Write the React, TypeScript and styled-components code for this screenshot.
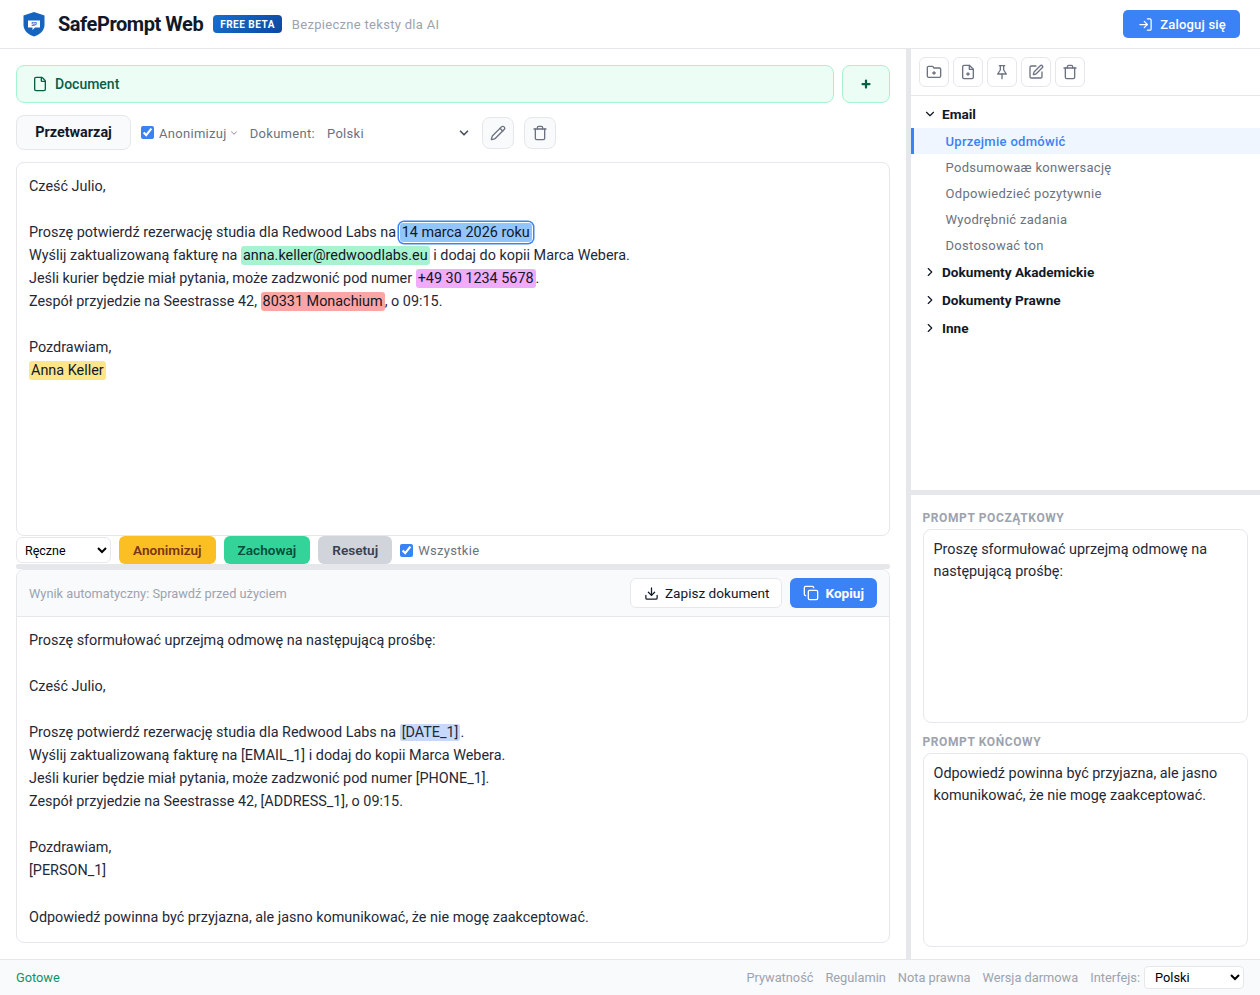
import React from "react";
import styled, { createGlobalStyle } from "styled-components";
import {
  ChevronDown,
  ChevronRight,
  Copy,
  Download,
  File,
  LogIn,
  Pencil,
  Plus,
  SquarePen,
  Trash,
} from "lucide-react";

const GlobalStyle = createGlobalStyle`
  html, body {
    margin: 0;
    padding: 0;
    background: #ffffff;
  }
  body {
    font-family: Roboto, "Liberation Sans", sans-serif;
    color: #1f2937;
  }
  * {
    box-sizing: border-box;
  }
`;

const Page = styled.div`
  display: flex;
  flex-direction: column;
  width: 1260px;
  height: 995px;
  overflow: hidden;
`;

const Header = styled.header`
  display: flex;
  align-items: center;
  flex: 0 0 49px;
  padding: 0 20px 0 22px;
  border-bottom: 1px solid #e5e7eb;
`;

const LogoMark = styled.svg`
  width: 24px;
  height: 26px;
  margin-right: 12px;
`;

const Brand = styled.div`
  margin-right: 10px;
  color: #111827;
  font-size: 20px;
  font-weight: 700;
  letter-spacing: -0.45px;
`;

const BetaBadge = styled.span`
  display: flex;
  align-items: center;
  height: 18px;
  margin-right: 10px;
  padding: 0 7px;
  background: linear-gradient(135deg, #1670cf, #0d47a1);
  border-radius: 4px;
  color: #ffffff;
  font-size: 10px;
  font-weight: 700;
  letter-spacing: 0.5px;
`;

const Tagline = styled.span`
  color: #9ca3af;
  font-size: 13px;
  letter-spacing: 0.3px;
`;

const LoginButton = styled.button`
  display: flex;
  align-items: center;
  gap: 7px;
  height: 28px;
  margin-left: auto;
  padding: 0 14px 0 15px;
  background: #3b82f6;
  border: none;
  border-radius: 5px;
  color: #ffffff;
  font: 500 13px Roboto, sans-serif;
  letter-spacing: 0.2px;
`;

const Main = styled.main`
  display: flex;
  flex: 1;
  min-height: 0;
`;

const LeftPane = styled.section`
  display: flex;
  flex-direction: column;
  width: 906px;
  padding: 16px;
`;

const Divider = styled.div`
  flex: 0 0 5px;
  background: #e5e7eb;
`;

const RightPane = styled.aside`
  display: flex;
  flex-direction: column;
  flex: 1;
  min-width: 0;
`;

const DocRow = styled.div`
  display: flex;
  gap: 8px;
  height: 38px;
`;

const DocTab = styled.div`
  display: flex;
  align-items: center;
  flex: 1;
  gap: 7px;
  padding: 0 15px;
  background: #ecfdf5;
  border: 1px solid #a7f3d0;
  border-radius: 8px;
  color: #065f46;
  font-size: 14px;
  font-weight: 500;
`;

const AddTab = styled.button`
  display: flex;
  align-items: center;
  justify-content: center;
  width: 48px;
  padding: 0;
  background: #ecfdf5;
  border: 1px solid #a7f3d0;
  border-radius: 8px;
  color: #065f46;
`;

const Toolbar = styled.div`
  display: flex;
  align-items: center;
  height: 35px;
  margin: 12px 0;
`;

const ProcessButton = styled.button`
  width: 115px;
  height: 35px;
  margin-right: 10px;
  background: #f9fafb;
  border: 1px solid #e5e7eb;
  border-radius: 8px;
  color: #111827;
  font: 700 14.4px Roboto, sans-serif;
`;

const Check = styled.input.attrs({ type: "checkbox", defaultChecked: true })`
  width: 13px;
  height: 13px;
  margin: 0 5px 0 0;
  accent-color: #3b82f6;
`;

const MutedLabel = styled.span`
  padding-top: 1px;
  color: #6b7280;
  font-size: 13px;
  letter-spacing: 0.3px;
`;

const AnonChevron = styled(ChevronDown)`
  margin: 1px 11px 0 2px;
  color: #9ca3af;
`;

const LangValue = styled(MutedLabel)`
  width: 130px;
  margin-left: 12px;
`;

const LangChevron = styled(ChevronDown)`
  margin-right: 11px;
  color: #4b5563;
`;

const SquareButton = styled.button`
  display: flex;
  align-items: center;
  justify-content: center;
  width: 32px;
  height: 32px;
  margin-right: 10px;
  padding: 0;
  background: #f9fafb;
  border: 1px solid #e5e7eb;
  border-radius: 8px;
  color: #6b7280;
`;

const Editor = styled.div`
  flex: 0 0 374px;
  padding: 12px;
  background: #ffffff;
  border: 1px solid #e5e7eb;
  border-radius: 8px;
  color: #1f2937;
  font-size: 14.4px;
  line-height: 1.6;
`;

const Line = styled.div`
  min-height: 23px;
  white-space: pre;
`;

const Mark = styled.span<{ $bg: string }>`
  padding: 1px 2px;
  background: ${({ $bg }) => $bg};
  border-radius: 3px;
  color: #111827;
`;

const ActiveMark = styled(Mark)`
  box-shadow: 0 0 0 1px #ffffff, 0 0 0 2.5px #3b82f6;
  border-radius: 4px;
`;

const TokenMark = styled.span`
  padding: 0 2px;
  background: #c7d9fb;
  border-radius: 2px;
`;

const ActionRow = styled.div`
  display: flex;
  align-items: center;
  flex: 0 0 28px;
  gap: 8px;
`;

const ModeSelect = styled.select`
  width: 95px;
  height: 26px;
  padding: 0 4px;
  background: #ffffff;
  border: 1px solid #e5e7eb;
  border-radius: 6px;
  color: #000000;
  font: 12.5px Roboto, sans-serif;
`;

const ActionButton = styled.button<{ $bg: string; $fg: string }>`
  height: 28px;
  padding: 0 14px;
  background: ${({ $bg }) => $bg};
  border: none;
  border-radius: 6px;
  color: ${({ $fg }) => $fg};
  font: 600 13.6px Roboto, sans-serif;
`;

const AllLabel = styled.label`
  display: flex;
  align-items: center;
`;

const HSplit = styled.div`
  flex: 0 0 5px;
  background: #e5e7eb;
  border-radius: 2px;
`;

const Result = styled.div`
  display: flex;
  flex-direction: column;
  flex: 1;
  min-height: 0;
  background: #ffffff;
  border: 1px solid #e5e7eb;
  border-radius: 8px;
  overflow: hidden;
`;

const ResultBar = styled.div`
  display: flex;
  align-items: center;
  flex: 0 0 47px;
  padding: 0 12px;
  background: #f9fafb;
  border-bottom: 1px solid #e5e7eb;
`;

const ResultNote = styled.span`
  margin-right: auto;
  color: #9ca3af;
  font-size: 12.8px;
`;

const SaveButton = styled.button`
  display: flex;
  align-items: center;
  gap: 6px;
  height: 30px;
  margin-right: 8px;
  padding: 0 12px 0 13px;
  background: #ffffff;
  border: 1px solid #e5e7eb;
  border-radius: 6px;
  color: #111827;
  font: 13.6px Roboto, sans-serif;
`;

const CopyButton = styled.button`
  display: flex;
  align-items: center;
  gap: 6px;
  height: 30px;
  padding: 0 13px;
  background: #3b82f6;
  border: none;
  border-radius: 6px;
  color: #ffffff;
  font: 700 13.6px Roboto, sans-serif;
`;

const ResultBody = styled.div`
  padding: 12px;
  color: #1f2937;
  font-size: 14.4px;
  line-height: 1.6;
`;

const IconBar = styled.div`
  display: flex;
  align-items: center;
  flex: 0 0 47px;
  gap: 4px;
  padding: 0 8px;
  border-bottom: 1px solid #e5e7eb;
`;

const IconButton = styled.button`
  display: flex;
  align-items: center;
  justify-content: center;
  width: 30px;
  height: 30px;
  padding: 0;
  background: #ffffff;
  border: 1px solid #e5e7eb;
  border-radius: 6px;
  color: #6b7280;
`;

const Tree = styled.nav`
  flex: 0 0 394px;
  padding-top: 4px;
`;

const Group = styled.div`
  display: flex;
  align-items: center;
  gap: 5px;
  height: 28px;
  padding-left: 12px;
  color: #111827;
  font-size: 13.6px;
  font-weight: 700;
`;

const Item = styled.div<{ $active?: boolean }>`
  display: flex;
  align-items: center;
  height: 26px;
  padding-left: 31.5px;
  background: ${({ $active }) => ($active ? "#eff6ff" : "transparent")};
  border-left: 3px solid ${({ $active }) => ($active ? "#3b82f6" : "transparent")};
  color: ${({ $active }) => ($active ? "#3b82f6" : "#6b7280")};
  font-size: 13px;
  font-weight: ${({ $active }) => ($active ? 500 : 400)};
  letter-spacing: 0.3px;
`;

const SideSplit = styled.div`
  flex: 0 0 5px;
  background: #e5e7eb;
`;

const Prompts = styled.div`
  display: flex;
  flex-direction: column;
  flex: 1;
  min-height: 0;
  padding: 16px 12px 12px 11.5px;
`;

const PromptLabel = styled.div`
  height: 14px;
  margin-bottom: 4px;
  color: #9ca3af;
  font-size: 12px;
  font-weight: 700;
  line-height: 14px;
  letter-spacing: 0.6px;
  text-transform: uppercase;
`;

const PromptBox = styled.div`
  flex: 0 0 194px;
  margin-bottom: 12px;
  padding: 9px 10px;
  background: #ffffff;
  border: 1px solid #e5e7eb;
  border-radius: 8px;
  color: #1f2937;
  font-size: 14.4px;
  line-height: 22px;

  &:last-child {
    margin-bottom: 0;
  }
`;

const Footer = styled.footer`
  display: flex;
  align-items: center;
  flex: 0 0 36px;
  padding: 0 16px;
  background: #f9fafb;
  border-top: 1px solid #e5e7eb;
  font-size: 12.8px;
`;

const Status = styled.span`
  margin-right: auto;
  color: #059669;
`;

const FooterLink = styled.a`
  margin-right: 12px;
  color: #9ca3af;
`;

const FooterLabel = styled.span`
  margin-right: 4px;
  color: #9ca3af;
`;

const LangSelect = styled.select`
  width: 100px;
  height: 23px;
  padding: 0 6px;
  background: #ffffff;
  border: 1px solid #e5e7eb;
  border-radius: 4px;
  color: #000000;
  font: 12.8px Roboto, sans-serif;
`;

const BadgeText = styled.text`
  fill: #1565c0;
  font-family: Roboto, sans-serif;
  font-size: 4.5px;
  font-weight: 700;
`;

const Logo = () => (
  <LogoMark viewBox="0 0 24 26">
    <path d="M12 1 L22.5 4.5 V14 C22.5 20 17 24 12 25.5 C7 24 1.5 20 1.5 14 V4.5 Z" fill="#1565c0" />
    <path d="M6 9.5 H18 V16.5 H13 L10.5 19 V16.5 H6 Z" fill="#ffffff" />
    <BadgeText x="12" y="14.7" textAnchor="middle">SP</BadgeText>
  </LogoMark>
);

const ToolIcon = styled.svg.attrs({
  viewBox: "0 0 24 24",
  fill: "none",
  stroke: "currentColor",
  strokeWidth: 2,
  strokeLinecap: "round",
  strokeLinejoin: "round",
})`
  width: 16px;
  height: 16px;
`;

const FolderAdd = () => (
  <ToolIcon>
    <path d="M4 20h16a2 2 0 0 0 2-2V8a2 2 0 0 0-2-2h-8L10 3.5H4a2 2 0 0 0-2 2V18a2 2 0 0 0 2 2Z" />
    <path d="M12 11.5v4M10 13.5h4" />
  </ToolIcon>
);

const FileAdd = () => (
  <ToolIcon>
    <path d="M14 2H6a2 2 0 0 0-2 2v16a2 2 0 0 0 2 2h12a2 2 0 0 0 2-2V8Z" />
    <path d="M14 2v6h6" />
    <path d="M12 13v4M10 15h4" />
  </ToolIcon>
);

const PushPin = () => (
  <ToolIcon>
    <path d="M8 2.5h8" />
    <path d="M9.5 2.5V9L5.5 15h13l-4-6V2.5" />
    <path d="M12 15v7" />
  </ToolIcon>
);

const App = () => {
  return (
    <Page>
      <GlobalStyle />
      <Header>
        <Logo />
        <Brand>SafePrompt Web</Brand>
        <BetaBadge>FREE BETA</BetaBadge>
        <Tagline>Bezpieczne teksty dla AI</Tagline>
        <LoginButton>
          <LogIn size={15} />
          Zaloguj się
        </LoginButton>
      </Header>
      <Main>
        <LeftPane>
          <DocRow>
            <DocTab>
              <File size={16} />
              Document
            </DocTab>
            <AddTab>
              <Plus size={12} strokeWidth={4.5} />
            </AddTab>
          </DocRow>
          <Toolbar>
            <ProcessButton>Przetwarzaj</ProcessButton>
            <Check />
            <MutedLabel>Anonimizuj</MutedLabel>
            <AnonChevron size={10} strokeWidth={2.5} />
            <MutedLabel>Dokument:</MutedLabel>
            <LangValue>Polski</LangValue>
            <LangChevron size={14} strokeWidth={3} />
            <SquareButton>
              <Pencil size={16} />
            </SquareButton>
            <SquareButton>
              <Trash size={16} />
            </SquareButton>
          </Toolbar>
          <Editor>
            <Line>Cześć Julio,</Line>
            <Line> </Line>
            <Line>
              Proszę potwierdź rezerwację studia dla Redwood Labs na <ActiveMark $bg="#93c5fd">14 marca 2026 roku</ActiveMark>
            </Line>
            <Line>
              Wyślij zaktualizowaną fakturę na <Mark $bg="#a7f3d0">anna.keller@redwoodlabs.eu</Mark> i dodaj do kopii Marca Webera.
            </Line>
            <Line>
              Jeśli kurier będzie miał pytania, może zadzwonić pod numer <Mark $bg="#f0abfc">+49 30 1234 5678</Mark>.
            </Line>
            <Line>
              Zespół przyjedzie na Seestrasse 42, <Mark $bg="#fca5a5">80331 Monachium</Mark>, o 09:15.
            </Line>
            <Line> </Line>
            <Line>Pozdrawiam,</Line>
            <Line>
              <Mark $bg="#fde68a">Anna Keller</Mark>
            </Line>
          </Editor>
          <ActionRow>
            <ModeSelect defaultValue="manual">
              <option value="manual">Ręczne</option>
            </ModeSelect>
            <ActionButton $bg="#fbbf24" $fg="#78350f">Anonimizuj</ActionButton>
            <ActionButton $bg="#34d399" $fg="#064e3b">Zachowaj</ActionButton>
            <ActionButton $bg="#d1d5db" $fg="#374151">Resetuj</ActionButton>
            <AllLabel>
              <Check />
              <MutedLabel>Wszystkie</MutedLabel>
            </AllLabel>
          </ActionRow>
          <HSplit />
          <Result>
            <ResultBar>
              <ResultNote>Wynik automatyczny: Sprawdź przed użyciem</ResultNote>
              <SaveButton>
                <Download size={15} />
                Zapisz dokument
              </SaveButton>
              <CopyButton>
                <Copy size={16} />
                Kopiuj
              </CopyButton>
            </ResultBar>
            <ResultBody>
              <Line>Proszę sformułować uprzejmą odmowę na następującą prośbę:</Line>
              <Line> </Line>
              <Line>Cześć Julio,</Line>
              <Line> </Line>
              <Line>
                Proszę potwierdź rezerwację studia dla Redwood Labs na <TokenMark>[DATE_1]</TokenMark>.
              </Line>
              <Line>Wyślij zaktualizowaną fakturę na [EMAIL_1] i dodaj do kopii Marca Webera.</Line>
              <Line>Jeśli kurier będzie miał pytania, może zadzwonić pod numer [PHONE_1].</Line>
              <Line>Zespół przyjedzie na Seestrasse 42, [ADDRESS_1], o 09:15.</Line>
              <Line> </Line>
              <Line>Pozdrawiam,</Line>
              <Line>[PERSON_1]</Line>
              <Line> </Line>
              <Line>Odpowiedź powinna być przyjazna, ale jasno komunikować, że nie mogę zaakceptować.</Line>
            </ResultBody>
          </Result>
        </LeftPane>
        <Divider />
        <RightPane>
          <IconBar>
            <IconButton><FolderAdd /></IconButton>
            <IconButton><FileAdd /></IconButton>
            <IconButton><PushPin /></IconButton>
            <IconButton><SquarePen size={16} /></IconButton>
            <IconButton><Trash size={16} /></IconButton>
          </IconBar>
          <Tree>
            <Group>
              <ChevronDown size={14} />
              Email
            </Group>
            <Item $active>Uprzejmie odmówić</Item>
            <Item>Podsumowaæ konwersację</Item>
            <Item>Odpowiedzieć pozytywnie</Item>
            <Item>Wyodrębnić zadania</Item>
            <Item>Dostosować ton</Item>
            <Group>
              <ChevronRight size={14} />
              Dokumenty Akademickie
            </Group>
            <Group>
              <ChevronRight size={14} />
              Dokumenty Prawne
            </Group>
            <Group>
              <ChevronRight size={14} />
              Inne
            </Group>
          </Tree>
          <SideSplit />
          <Prompts>
            <PromptLabel>Prompt początkowy</PromptLabel>
            <PromptBox>Proszę sformułować uprzejmą odmowę na następującą prośbę:</PromptBox>
            <PromptLabel>Prompt końcowy</PromptLabel>
            <PromptBox>Odpowiedź powinna być przyjazna, ale jasno komunikować, że nie mogę zaakceptować.</PromptBox>
          </Prompts>
        </RightPane>
      </Main>
      <Footer>
        <Status>Gotowe</Status>
        <FooterLink>Prywatność</FooterLink>
        <FooterLink>Regulamin</FooterLink>
        <FooterLink>Nota prawna</FooterLink>
        <FooterLink>Wersja darmowa</FooterLink>
        <FooterLabel>Interfejs:</FooterLabel>
        <LangSelect defaultValue="pl">
          <option value="pl">Polski</option>
        </LangSelect>
      </Footer>
    </Page>
  );
};

export default App;
